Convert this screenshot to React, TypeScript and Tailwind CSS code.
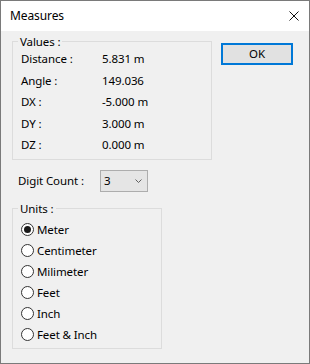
import { useState } from 'react'

const values = [
  { label: 'Distance :', value: '5.831 m' },
  { label: 'Angle :', value: '149.036' },
  { label: 'DX :', value: '-5.000 m' },
  { label: 'DY :', value: '3.000 m' },
  { label: 'DZ :', value: '0.000 m' },
]

const units = ['Meter', 'Centimeter', 'Milimeter', 'Feet', 'Inch', 'Feet & Inch']

function Radio({ checked }: { checked: boolean }) {
  return (
    <span className="w-[13px] h-[13px] rounded-full border border-[#333333] bg-white flex items-center justify-center shrink-0">
      {checked && <span className="w-[7px] h-[7px] rounded-full bg-[#1a1a1a]" />}
    </span>
  )
}

export default function App() {
  const [unit, setUnit] = useState('Meter')

  return (
    <div
      className="w-[310px] h-[364px] border border-[#7a7a7a] bg-[#f0f0f0] flex flex-col text-[11.5px] tracking-[-0.1px] text-black"
      style={{ fontFamily: '"Segoe UI", "Noto Sans", sans-serif' }}
    >
      {/* title bar */}
      <div className="h-[30px] bg-white flex items-center justify-between pl-[9px] pr-[10px] shrink-0">
        <span className="leading-none text-[12px]">Measures</span>
        <svg width="10" height="10" viewBox="0 0 10 10">
          <path d="M0.5 0.5 L9.5 9.5 M9.5 0.5 L0.5 9.5" stroke="#111" strokeWidth="1" />
        </svg>
      </div>

      <div className="flex items-start pl-[11px] pt-[3px]">
        <div className="w-[200px] flex flex-col">
          {/* Values group */}
          <fieldset className="border border-[#dcdcdc] pl-[8px] pb-[3.5px]">
            <legend className="-ml-[3px] px-[2px] leading-[15px]">Values :</legend>
            <div className="-mt-px">
              {values.map((row) => (
                <div key={row.label} className="flex h-[21.5px] items-center">
                  <span className="w-[81px]">{row.label}</span>
                  <span>{row.value}</span>
                </div>
              ))}
            </div>
          </fieldset>

          {/* Digit count */}
          <div className="flex items-center mt-[10px] pl-[6px]">
            <span className="w-[82px]">Digit Count :</span>
            <div className="w-[48px] h-[22px] border border-[#adadad] bg-[#e5e5e5] flex items-center justify-between pl-[3px] pr-[5px]">
              <span>3</span>
              <svg width="7" height="4" viewBox="0 0 7 4">
                <path d="M0.5 0.5 L3.5 3.5 L6.5 0.5" fill="none" stroke="#606060" strokeWidth="1" />
              </svg>
            </div>
          </div>

          {/* Units group */}
          <fieldset className="w-[150px] mt-[9px] border border-[#dcdcdc] pl-[8px] pb-[3px]">
            <legend className="-ml-[3px] px-[2px] leading-[15px]">Units :</legend>
            <div className="mt-[3px]">
              {units.map((u) => (
                <div
                  key={u}
                  onClick={() => setUnit(u)}
                  className="flex h-[21px] items-center gap-[3px] cursor-default"
                >
                  <Radio checked={unit === u} />
                  <span>{u}</span>
                </div>
              ))}
            </div>
          </fieldset>
        </div>

        <button className="ml-[9px] mt-[9px] w-[72px] h-[22px] border-2 border-[#0078d7] bg-[#e1e1e1] flex items-center justify-center leading-none">
          OK
        </button>
      </div>
    </div>
  )
}
